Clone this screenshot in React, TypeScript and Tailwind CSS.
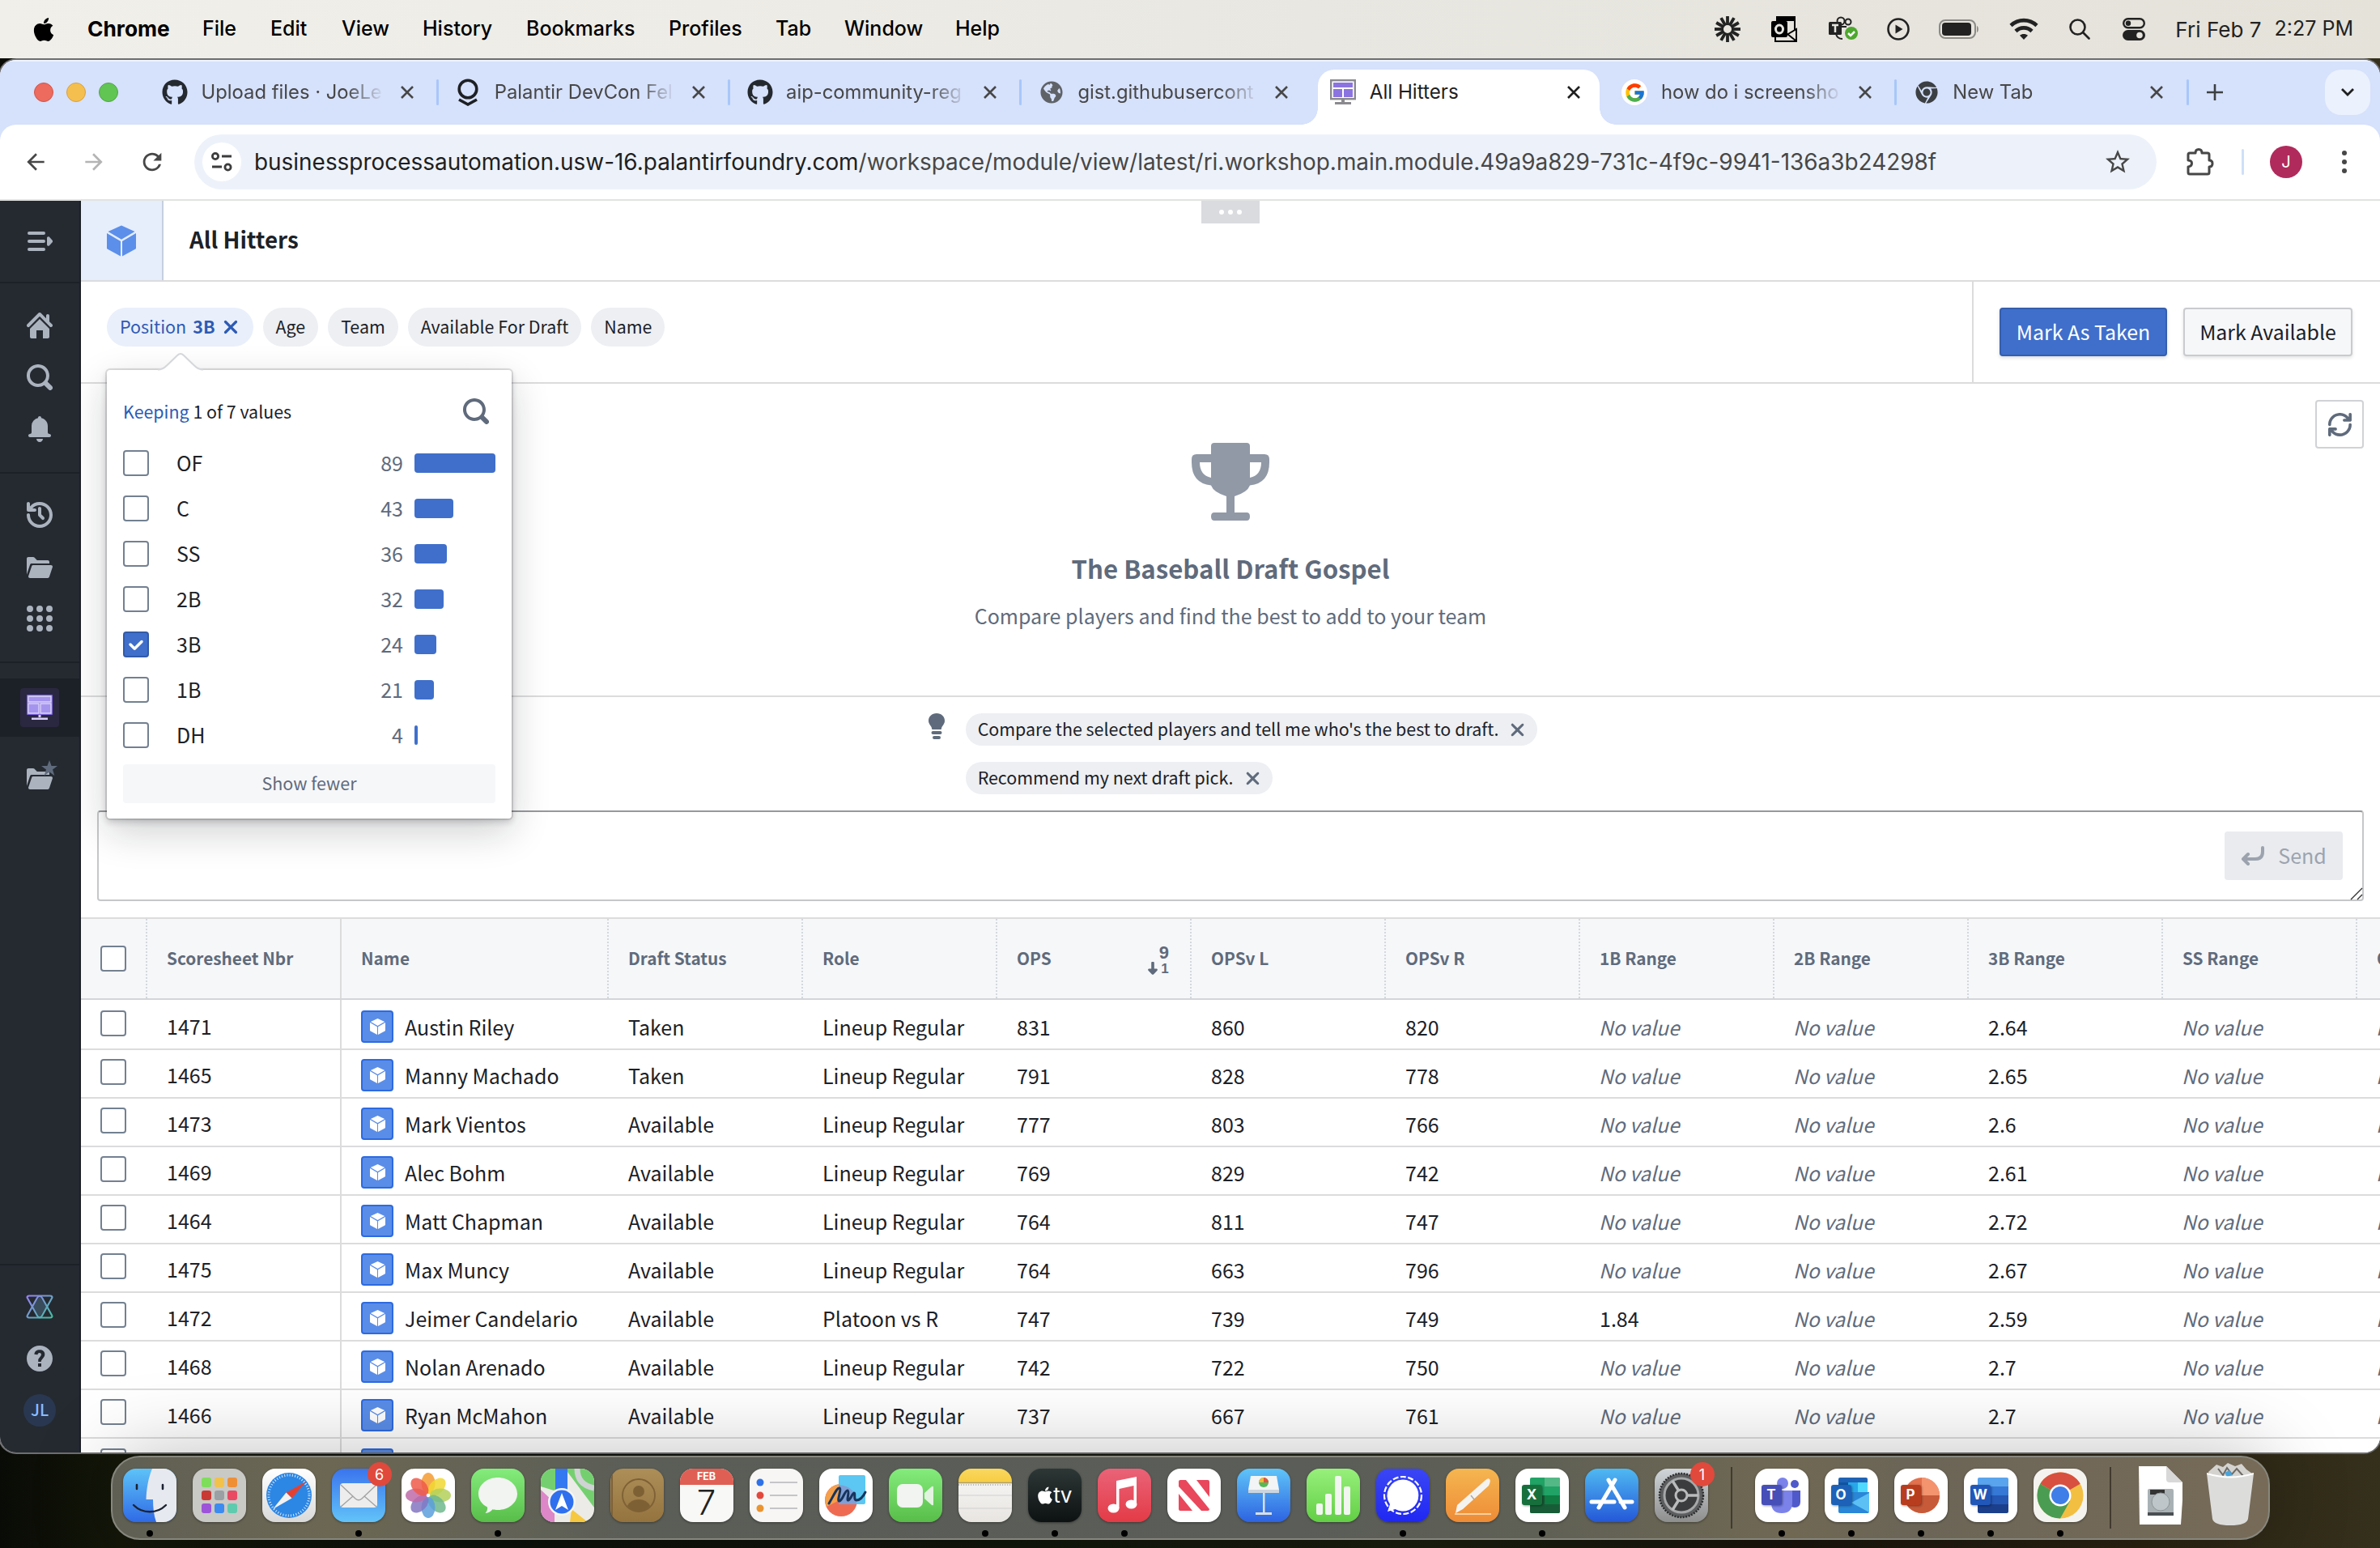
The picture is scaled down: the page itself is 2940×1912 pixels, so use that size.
import React from "react";
import { FaApple, FaGithub, FaGlobeAmericas, FaChrome } from "react-icons/fa";
import { FcGoogle } from "react-icons/fc";
import { MdArrowBack, MdArrowForward, MdRefresh, MdStarBorder } from "react-icons/md";

const glyphs = {
  search: "M15.55 13.43l-2.67-2.68a6.94 6.94 0 001.11-3.76c0-3.87-3.13-7-7-7s-7 3.13-7 7 3.13 7 7 7c1.39 0 2.68-.42 3.76-1.11l2.68 2.67a1.498 1.498 0 102.12-2.12zm-8.56-1.44c-2.76 0-5-2.24-5-5s2.24-5 5-5 5 2.24 5 5-2.24 5-5 5z",
  home: "M2 10v5c0 .55.45 1 1 1h3v-5h4v5h3c.55 0 1-.45 1-1v-5L8 4l-6 6zm13.71-2.71L14 5.59V2c0-.55-.45-1-1-1s-1 .45-1 1v1.59L8.71.29C8.53.11 8.28 0 8 0s-.53.11-.71.29l-7 7a1.003 1.003 0 001.42 1.42L8 2.41l6.29 6.29c.18.19.43.3.71.3a1.003 1.003 0 00.71-1.71z",
  folder: "M2.06 6.69c.14-.4.5-.69.94-.69h11V5c0-.55-.45-1-1-1H6.41l-1.7-1.71A.997.997 0 004 2H1c-.55 0-1 .45-1 1v9.84l2.05-6.15h.01zM16 8c0-.55-.45-1-1-1H4a.99.99 0 00-.94.69l-2 6c-.04.09-.06.2-.06.31 0 .55.45 1 1 1h11c.44 0 .81-.29.94-.69l2-6c.04-.09.06-.2.06-.31z",
  bell: "M8 16c1.1 0 2-.9 2-2H6c0 1.1.9 2 2 2zm6-5c-.55 0-1-.45-1-1V6c0-2.43-1.73-4.45-4.02-4.9 0-.04.02-.06.02-.1 0-.55-.45-1-1-1S7 .45 7 1c0 .04.02.06.02.1A4.992 4.992 0 003 6v4c0 .55-.45 1-1 1s-1 .45-1 1 .45 1 1 1h12c.55 0 1-.45 1-1s-.45-1-1-1z",
  history: "M8 3c-.55 0-1 .45-1 1v4c0 .28.11.53.29.71l2 2a1.003 1.003 0 001.42-1.42L9 7.59V4c0-.55-.45-1-1-1zm0-3a7.95 7.95 0 00-6 2.74V1c0-.55-.45-1-1-1s-1 .45-1 1v4c0 .55.45 1 1 1h4c.55 0 1-.45 1-1s-.45-1-1-1H3.54C4.64 2.78 6.23 2 8 2c3.31 0 6 2.69 6 6 0 3.31-2.69 6-6 6s-6-2.69-6-6c0-.55-.45-1-1-1s-1 .45-1 1c0 4.42 3.58 8 8 8s8-3.58 8-8-3.58-8-8-8z",
  refresh: "M14.99 6.99c-.55 0-1 .45-1 1 0 3.31-2.69 6-6 6-1.77 0-3.36-.78-4.46-2h1.46c.55 0 1-.45 1-1s-.45-1-1-1h-4c-.55 0-1 .45-1 1v4c0 .55.45 1 1 1s1-.45 1-1v-1.74a7.95 7.95 0 006 2.74c4.42 0 8-3.58 8-8 0-.55-.45-1-1-1zm0-7c-.55 0-1 .45-1 1v1.74a7.95 7.95 0 00-6-2.74c-4.42 0-8 3.58-8 8 0 .55.45 1 1 1s1-.45 1-1c0-3.31 2.69-6 6-6 1.77 0 3.36.78 4.46 2h-1.46c-.55 0-1 .45-1 1s.45 1 1 1h4c.55 0 1-.45 1-1v-4c0-.55-.45-1-1-1z",
  cross: "M9.41 8l3.29-3.29c.19-.18.3-.43.3-.71a1.003 1.003 0 00-1.71-.71L8 6.59l-3.29-3.3a1.003 1.003 0 00-1.42 1.42L6.59 8 3.3 11.29c-.19.18-.3.43-.3.71a1.003 1.003 0 001.71.71L8 9.41l3.29 3.29c.18.19.43.3.71.3a1.003 1.003 0 00.71-1.71L9.41 8z",
  help: "M8 0C3.58 0 0 3.58 0 8s3.58 8 8 8 8-3.58 8-8-3.58-8-8-8zm1 13H7v-2h2v2zm1.93-6.52c-.14.32-.35.64-.62.97L9.25 8.83c-.12.15-.24.29-.28.42-.04.13-.09.3-.09.52V10H7.12V8.88s.05-.51.21-.71L8.4 6.73c.22-.26.35-.49.44-.68.09-.19.12-.38.12-.58 0-.3-.1-.55-.28-.75-.18-.19-.44-.28-.76-.28-.33 0-.59.1-.78.29-.19.19-.33.46-.4.81-.03.11-.1.15-.2.14l-1.7-.25c-.12-.01-.16-.08-.14-.19.12-.82.46-1.47 1.03-1.94.57-.48 1.32-.72 2.25-.72.47 0 .9.07 1.29.22s.72.34 1 .59c.28.25.49.55.65.89.15.35.22.72.22 1.12s-.07.75-.21 1.08z",
  tick: "M12 5c-.28 0-.53.11-.71.29L7 9.59l-2.29-2.3a1.003 1.003 0 00-1.42 1.42l3 3c.18.18.43.29.71.29s.53-.11.71-.29l5-5A1.003 1.003 0 0012 5z",
  grid: "M2 0a2 2 0 100 4 2 2 0 000-4zm6 0a2 2 0 100 4 2 2 0 000-4zm6 0a2 2 0 100 4 2 2 0 000-4zM2 6a2 2 0 100 4 2 2 0 000-4zm6 0a2 2 0 100 4 2 2 0 000-4zm6 0a2 2 0 100 4 2 2 0 000-4zM2 12a2 2 0 100 4 2 2 0 000-4zm6 0a2 2 0 100 4 2 2 0 000-4zm6 0a2 2 0 100 4 2 2 0 000-4z",
  menuOpen: "M1.5 2h9a1 1 0 010 2h-9a1 1 0 010-2zm0 5h9a1 1 0 010 2h-9a1 1 0 010-2zm0 5h9a1 1 0 010 2h-9a1 1 0 010-2zM12.5 6c0-.8.8-1.2 1.4-.7l1.8 1.9c.5.5.5 1.1 0 1.6l-1.8 1.9c-.6.5-1.4.1-1.4-.7V6z",
};

function Glyph({ name, className = "w-8 h-8" }: { name: keyof typeof glyphs; className?: string }) {
  return (
    <svg viewBox="0 0 16 16" className={className} fill="currentColor">
      <path d={glyphs[name]} fillRule="evenodd" />
    </svg>
  );
}

function Cube({ className }: { className: string }) {
  return (
    <svg viewBox="0 0 36 38" className={className} fill="currentColor">
      <path d="M18 0l16.5 7.6L18 17.2 1.5 7.6z" />
      <path d="M0 9.6l17 9.8V38L1 29.3c-.7-.4-1-.9-1-1.6z" />
      <path d="M36 9.6l-17 9.8V38l16-8.700c.7-.4 1-.9 1-1.6z" />
    </svg>
  );
}

/* ---------- macOS menu bar ---------- */

function MenuBar() {
  return (
    <div className="flex h-[72px] shrink-0 items-center bg-[linear-gradient(90deg,#f0efe9_0%,#eeece6_30%,#e8e7e1_55%,#e5e2da_100%)] pl-[40px] pr-[33px] text-[25px] font-medium text-black">
      <FaApple className="h-[33px] w-[28px]" />
      <span className="ml-[40px] w-[142px] text-[26.300px] font-bold">Chrome</span>
      <span className="w-[84px]">File</span>
      <span className="w-[88px]">Edit</span>
      <span className="w-[100px]">View</span>
      <span className="w-[128px]">History</span>
      <span className="w-[176px]">Bookmarks</span>
      <span className="w-[132px]">Profiles</span>
      <span className="w-[85px]">Tab</span>
      <span className="w-[137px]">Window</span>
      <span>Help</span>
      <div className="ml-auto flex items-center text-[#222]">
        <svg viewBox="-17 -17 34 34" className="h-[34px] w-[34px]" stroke="#222" strokeWidth="3.800">
          {[0, 30, 60, 90, 120, 150, 180, 210, 240, 270, 300, 330].map((a) => (
            <line key={a} x1="0" y1="-6" x2="0" y2="-16" transform={`rotate(${a})`} />
          ))}
          <circle r="6" fill="none" strokeWidth="2" />
        </svg>
        <svg viewBox="0 0 32 32" className="ml-[37px] h-8 w-8" fill="none" stroke="#000" strokeWidth="2">
          <path d="M7 6V1h22v16M5 26v5h26V16l-11 6.500" />
          <path d="M7 2h22v3H7z" fill="#000" />
          <path d="M20 22l10 8" />
          <rect x="0" y="6" width="20" height="20" rx="2" fill="#000" stroke="none" />
          <ellipse cx="10" cy="16" rx="4.500" ry="5" stroke="#e6e5df" strokeWidth="3" />
        </svg>
        <svg viewBox="0 0 37 32" className="ml-[39px] h-8 w-[37px]" fill="none" stroke="#222" strokeWidth="2">
          <circle cx="15" cy="6" r="4.500" />
          <circle cx="24" cy="7" r="3.500" />
          <path d="M16 13h6M9 22c1 4 4 6 8 6" />
          <rect x="0" y="7" width="16" height="16" rx="1.500" fill="#222" stroke="none" />
          <path d="M4 11h8M8 11v9" stroke="#e6e5df" strokeWidth="2.500" />
          <circle cx="28" cy="21" r="8" fill="#4ea72e" stroke="none" />
          <path d="M24 21l3 3 5-5" stroke="#fff" strokeWidth="2.500" />
        </svg>
        <svg viewBox="0 0 28 28" className="ml-[35px] h-7 w-7" fill="none" stroke="#222" strokeWidth="2.600">
          <circle cx="14" cy="14" r="12.500" />
          <path d="M10.500 8.500l9 5.500-9 5.500z" fill="#222" stroke="none" />
        </svg>
        <svg viewBox="0 0 50 24" className="ml-[36px] h-6 w-[50px]" fill="none">
          <rect x="1" y="1" width="44" height="22" rx="7" stroke="#8b8a86" strokeWidth="2" />
          <rect x="4" y="4" width="36" height="16" rx="4" fill="#222" />
          <path d="M47 8c2.500 1 2.500 7 0 8z" fill="#8b8a86" />
        </svg>
        <svg viewBox="0 0 36 28" className="ml-[37px] h-7 w-[36px]" fill="none" stroke="#222" strokeWidth="4.600">
          <path d="M2 9.500c9-8.500 23-8.500 32 0" />
          <path d="M8 16.500c5.500-5.500 14.500-5.500 20 0" />
          <path d="M18 27l-5-5.200c2.800-2.400 7.200-2.400 10 0z" fill="#222" stroke="none" />
        </svg>
        <svg viewBox="0 0 26 26" className="ml-[38px] h-[26px] w-[26px]" fill="none" stroke="#222" strokeWidth="2.600" strokeLinecap="round">
          <circle cx="10.500" cy="10.500" r="9" />
          <path d="M17.500 17.500l7 7" />
        </svg>
        <svg viewBox="0 0 28 28" className="ml-[40px] h-7 w-7">
          <rect x="1.200" y="1.200" width="25.600" height="11" rx="5.500" fill="none" stroke="#222" strokeWidth="2.400" />
          <circle cx="7" cy="6.700" r="3.200" fill="#222" />
          <rect x="0" y="15" width="28" height="13" rx="6.500" fill="#222" />
          <circle cx="21" cy="21.500" r="3.800" fill="#e6e3dc" />
        </svg>
        <span className="ml-[37px] text-[26px] font-normal tracking-[0.050px]">Fri Feb 7</span>
        <span className="ml-[16px] text-[25px] font-normal">2:27 PM</span>
      </div>
    </div>
  );
}

/* ---------- Browser chrome ---------- */

function CloseX({ dark = false }: { dark?: boolean }) {
  return (
    <svg viewBox="0 0 16 16" className={dark ? "h-4 w-4 text-[#1f1f1f]" : "h-4 w-4 text-[#474747]"} stroke="currentColor" strokeWidth="2.600">
      <path d="M1 1l14 14M15 1L1 15" />
    </svg>
  );
}

const palantirMark = (
  <svg viewBox="0 0 26 34" className="h-[34px] w-[26px]" fill="none" stroke="#1e2124" strokeWidth="3.600">
    <circle cx="13" cy="13" r="10.800" />
    <path d="M2 26l11 6 11-6" />
  </svg>
);

const workshopMark = (
  <svg viewBox="0 0 32 32" className="h-8 w-8">
    <rect x="1.200" y="1.200" width="29.600" height="23" fill="#fff" stroke="#8a8a8f" strokeWidth="2.400" />
    <rect x="4" y="4" width="24" height="6" fill="#8b74e0" />
    <rect x="4" y="12" width="11" height="10" fill="#8b74e0" />
    <rect x="17" y="12" width="11" height="10" fill="#8b74e0" />
    <path d="M6 28h20v3H6zM14 25h4v3h-4z" fill="#8a8a8f" />
  </svg>
);

const tabs = [
  { title: "Upload files · JoeLe", icon: <FaGithub className="h-[32px] w-[32px] text-[#24292f]" />, sep: true, first: true },
  { title: "Palantir DevCon Fel", icon: palantirMark, sep: true },
  { title: "aip-community-reg", icon: <FaGithub className="h-[32px] w-[32px] text-[#24292f]" />, sep: true },
  { title: "gist.githubusercont", icon: <FaGlobeAmericas className="h-[28px] w-[28px] text-[#5f6368]" />, sep: false },
  { title: "All Hitters", icon: workshopMark, sep: false, active: true },
  { title: "how do i screensho", icon: <span className="flex h-8 w-8 items-center justify-center rounded-full bg-white"><FcGoogle className="h-[27px] w-[27px]" /></span>, sep: true },
  { title: "New Tab", icon: <FaChrome className="h-[28px] w-[28px] text-[#3c4043]" />, sep: true },
];

function TabStrip() {
  return (
    <div className="flex h-[80px] shrink-0 bg-[#d6e1fb] pl-[42px] shadow-[inset_0_2px_0_#eef3fd]">
      <div className="flex w-[137.500px] items-center gap-4">
        <span className="h-6 w-6 rounded-full border border-[#d35448] bg-[#ed6a5e]" />
        <span className="h-6 w-6 rounded-full border border-[#d9a13e] bg-[#f5bf4f]" />
        <span className="h-6 w-6 rounded-full border border-[#50a73f] bg-[#61c554]" />
      </div>
      {tabs.map((t) => (
        <div key={t.title} className="relative flex h-full w-[360.300px] items-center">
          {t.active && (
            <>
              <div className="absolute bottom-0 left-[7px] h-[68px] w-[348px] rounded-t-[20px] bg-white" />
              <div className="absolute bottom-0 left-[-13px] h-5 w-5 bg-[radial-gradient(circle_at_0_0,transparent_19.500px,#fff_20px)]" />
              <div className="absolute bottom-0 left-[355px] h-5 w-5 bg-[radial-gradient(circle_at_100%_0,transparent_19.500px,#fff_20px)]" />
            </>
          )}
          <div className={t.first ? "relative ml-[20px] flex w-8 justify-center" : "relative ml-[22.500px] flex w-8 justify-center"}>{t.icon}</div>
          <div
            className={
              t.active
                ? "relative ml-[16.500px] w-[222px] whitespace-nowrap text-[24.200px] text-[#1f1f1f]"
                : t.first
                  ? "relative ml-[17px] w-[223px] whitespace-nowrap text-[23.800px] text-[#474747] [mask-image:linear-gradient(90deg,#000_80%,transparent_101%)]"
                  : "relative ml-[16.500px] w-[221px] whitespace-nowrap text-[23.800px] text-[#474747] [mask-image:linear-gradient(90deg,#000_80%,transparent_101%)]"
            }
          >
            {t.title}
          </div>
          <div className={t.active ? "relative ml-[22px]" : "relative ml-[23px]"}>
            <CloseX dark={t.active} />
          </div>
          {t.sep && <span className="absolute right-[-2px] h-8 w-[3px] rounded bg-[#a8c7fa]" />}
        </div>
      ))}
      <div className="flex flex-1 items-center pl-[24px] pr-[12px]">
        <svg viewBox="0 0 20 20" className="h-5 w-5" stroke="#3c4043" strokeWidth="2.600"><path d="M10 0v20M0 10h20" /></svg>
        <div className="ml-auto flex h-14 w-14 items-center justify-center rounded-[20px] bg-[#ebf1fd]">
          <svg viewBox="0 0 16 10" className="h-[10px] w-4" fill="none" stroke="#1f1f1f" strokeWidth="2.800"><path d="M1 1l7 7 7-7" /></svg>
        </div>
      </div>
    </div>
  );
}

function Toolbar() {
  return (
    <div className="shrink-0 bg-[#d6e1fb]">
      <div className="flex h-[94px] items-center rounded-t-[20px] border-b-2 border-[#e1e3e1] bg-white pl-[28px]">
        <MdArrowBack className="h-8 w-8 text-[#474747]" />
        <MdArrowForward className="ml-[40px] h-8 w-8 text-[#b4b4b4]" />
        <MdRefresh className="ml-[39px] h-[34px] w-[34px] text-[#474747]" />
        <div className="ml-[35px] flex h-[68px] w-[2424px] items-center rounded-full bg-[#edf2fa] pl-[10px] pr-[30px]">
          <div className="flex h-12 w-12 items-center justify-center rounded-full bg-white">
            <svg viewBox="0 0 26 24" className="h-6 w-[26px]" fill="none" stroke="#3c3c3c" strokeWidth="2.800">
              <circle cx="5" cy="5" r="3.600" /><path d="M13 5h12M1 18h12" /><circle cx="20.500" cy="18.500" r="3.600" />
            </svg>
          </div>
          <div className="ml-[16px] whitespace-nowrap pt-[2px] text-[27.930px] text-[#474747]">
            <span className="text-[#1f1f1f]">businessprocessautomation.usw-16.palantirfoundry.com</span>/workspace/module/view/latest/ri.workshop.main.module.49a9a829-731c-4f9c-9941-136a3b24298f
          </div>
          <MdStarBorder className="ml-auto h-9 w-9 text-[#474747]" />
        </div>
        <svg viewBox="0 0 34 34" className="ml-[37px] h-[34px] w-[34px]" fill="none" stroke="#474747" strokeWidth="3" strokeLinejoin="round">
          <path d="M2 8q0-2 2-2h7q0-4.500 4-4.500T19 6h7q2 0 2 2v7q4 0 4 4t-4 4v7q0 2-2 2H4q-2 0-2-2v-7q4.500-.5 4.500-4.200T2 15z" />
        </svg>
        <span className="ml-[34px] h-8 w-[3px] rounded bg-[#cfdff8]" />
        <span className="ml-[32px] flex h-10 w-10 items-center justify-center rounded-full bg-[#b02a5b] text-[20px] text-white">J</span>
        <svg viewBox="0 0 6 28" className="ml-[49px] h-7 w-[6px]" fill="#474747"><circle cx="3" cy="3" r="3" /><circle cx="3" cy="14" r="3" /><circle cx="3" cy="25" r="3" /></svg>
      </div>
    </div>
  );
}

/* ---------- Foundry sidebar ---------- */

function Slot({ children }: { children: React.ReactNode }) {
  return <div className="flex h-16 items-center justify-center">{children}</div>;
}

function Sidebar() {
  return (
    <div className="flex w-[100px] shrink-0 flex-col border-r-2 border-[#1c2127] bg-[#252a31] text-[#abb3bf]">
      <div className="flex h-[100px] items-center justify-center"><Glyph name="menuOpen" /></div>
      <div className="border-t-2 border-[#1c2127] pb-[21px] pt-[20px]">
        <Slot><Glyph name="home" /></Slot>
        <Slot><Glyph name="search" /></Slot>
        <Slot><Glyph name="bell" /></Slot>
      </div>
      <div className="border-t-2 border-[#1c2127] pb-[21px] pt-[19px]">
        <Slot><Glyph name="history" /></Slot>
        <Slot><Glyph name="folder" /></Slot>
        <Slot><Glyph name="grid" /></Slot>
      </div>
      <div className="border-t-2 border-[#1c2127] pt-[19px]">
        <div className="flex h-[72px] items-center justify-center bg-[#1c2127]">
          <div className="flex h-12 w-12 items-center justify-center rounded-[4px] bg-[#2a2840]">
            <svg viewBox="0 0 32 32" className="h-8 w-8">
              <rect width="32" height="25" rx="1" fill="#7961db" />
              <path d="M2 2h28v7H2zM2 11h13v12H2zM17 11h13v12H17z" fill="#a594ee" stroke="#ddd5fb" strokeWidth="1.400" />
              <path d="M14.500 25h3v3h-3zM6 28.500h20V31H6z" fill="#d9d0fa" />
            </svg>
          </div>
        </div>
      </div>
      <div className="mt-[19px] flex h-16 items-center justify-center">
        <div className="relative">
          <Glyph name="folder" />
          <svg viewBox="0 0 20 20" className="absolute -right-[6px] -top-[6px] h-5 w-5 fill-[#5f6b7c]"><path d="M10 0l2.600 7H20l-6 4.400L16.300 19 10 14.500 3.700 19 6 11.400 0 7h7.400z" /></svg>
        </div>
      </div>
      <div className="mt-auto border-t-2 border-[#1c2127] pb-[20px] pt-[19px]">
        <Slot>
          <svg viewBox="0 0 34 30" className="h-[30px] w-[34px]" fill="none" strokeWidth="2.200">
            <defs>
              <linearGradient id="aip" x1="0" y1="0" x2="1" y2="1"><stop offset="0" stopColor="#9881f3" /><stop offset="1" stopColor="#43bf9f" /></linearGradient>
            </defs>
            <path d="M17 2l8 13-8 13-8-13z" fill="#3f5566" opacity=".8" />
            <path d="M4 1.500h26c2 0 3 1.500 2 3L20 26c-1.500 3-4.500 3-6 0L2 4.500c-1-1.500 0-3 2-3z" stroke="url(#aip)" />
            <path d="M4 28.500h26c2 0 3-1.500 2-3L20 4c-1.500-3-4.500-3-6 0L2 25.500c-1 1.500 0 3 2 3z" stroke="url(#aip)" />
          </svg>
        </Slot>
        <Slot><Glyph name="help" /></Slot>
        <Slot>
          <span className="flex h-10 w-10 items-center justify-center rounded-full bg-[#293850] pb-[2px] font-['Noto_Sans_CJK_SC',sans-serif] text-[20px] font-medium text-[#8abbff]">JL</span>
        </Slot>
      </div>
    </div>
  );
}

/* ---------- Workshop module ---------- */

function Checkbox({ checked = false }: { checked?: boolean }) {
  return checked ? (
    <span className="flex h-8 w-8 shrink-0 items-center justify-center rounded-[4px] border-2 border-[#325aa8] bg-[#3f6fcb] text-white"><Glyph name="tick" /></span>
  ) : (
    <span className="block h-8 w-8 shrink-0 rounded-[4px] border-2 border-[#738091] bg-white" />
  );
}

function Chip({ children }: { children: React.ReactNode }) {
  return <span className="flex h-12 items-center rounded-full bg-[#edeff2] px-4 pb-[1px] text-[21.400px]">{children}</span>;
}

const positions = [
  { label: "OF", count: 89, width: 100 },
  { label: "C", count: 43, width: 48 },
  { label: "SS", count: 36, width: 40 },
  { label: "2B", count: 32, width: 36 },
  { label: "3B", count: 24, width: 27, checked: true },
  { label: "1B", count: 21, width: 24 },
  { label: "DH", count: 4, width: 4 },
];

function PositionPopover() {
  return (
    <div className="absolute left-[32px] top-[109px] z-10 h-[554px] w-[500px] rounded-[4px] bg-white px-5 pt-[20px] shadow-[0_0_0_2px_rgba(17,20,24,0.12),0_4px_8px_rgba(17,20,24,0.2),0_16px_48px_rgba(17,20,24,0.2)]">
      <svg viewBox="0 0 60 24" className="absolute -top-[22px] left-[61px] h-6 w-[60px]">
        <path d="M0 22c6 0 9-2 13-6L26 4q4-4 8 0l13 12c4 4 7 6 13 6v2H0z" fill="#fff" />
        <path d="M2 21.500c5 0 8-2 11-5L26 4q4-4 8 0l13 12.500c3 3 6 5 11 5" fill="none" stroke="#d5d7da" strokeWidth="2" />
      </svg>
      <div className="flex h-[62px] items-center justify-between pr-2 text-[21.400px]">
        <span><span className="text-[#2d5bb5]">Keeping</span> 1 of 7 values</span>
        <Glyph name="search" className="h-8 w-8 text-[#5f6b7c]" />
      </div>
      <div className="mt-[5px] flex flex-col">
        {positions.map((p) => (
          <div key={p.label} className="flex h-14 items-center text-[25px]">
            <Checkbox checked={p.checked} />
            <span className="ml-[34px] flex-1 pb-[1px]">{p.label}</span>
            <span className="pb-[1px] text-[#5f6b7c]">{p.count}</span>
            <span className="ml-[14px] w-[100px]">
              <span className="block h-6 rounded-[4px] bg-[#3f6fcb]" style={{ width: p.width }} />
            </span>
          </div>
        ))}
      </div>
      <div className="mt-[8px] flex h-12 items-center justify-center rounded-[4px] bg-[#f6f7f9] pb-[2px] text-[21.500px] text-[#5f6b7c]">Show fewer</div>
    </div>
  );
}

const headers = ["Draft Status", "Role", "OPS", "OPSv L", "OPSv R", "1B Range", "2B Range", "3B Range", "SS Range"];

const rows: [string, string, string, string, string, string, string, string, string][] = [
  ["1471", "Austin Riley", "Taken", "Lineup Regular", "831", "860", "820", "", "2.64"],
  ["1465", "Manny Machado", "Taken", "Lineup Regular", "791", "828", "778", "", "2.65"],
  ["1473", "Mark Vientos", "Available", "Lineup Regular", "777", "803", "766", "", "2.6"],
  ["1469", "Alec Bohm", "Available", "Lineup Regular", "769", "829", "742", "", "2.61"],
  ["1464", "Matt Chapman", "Available", "Lineup Regular", "764", "811", "747", "", "2.72"],
  ["1475", "Max Muncy", "Available", "Lineup Regular", "764", "663", "796", "", "2.67"],
  ["1472", "Jeimer Candelario", "Available", "Platoon vs R", "747", "739", "749", "1.84", "2.59"],
  ["1468", "Nolan Arenado", "Available", "Lineup Regular", "742", "722", "750", "", "2.7"],
  ["1466", "Ryan McMahon", "Available", "Lineup Regular", "737", "667", "761", "", "2.7"],
];

function Value({ text }: { text: string }) {
  return (
    <div className="w-[240px] shrink-0 whitespace-nowrap pl-6 pt-[5px]">
      {text || <span className="-ml-px text-[24.500px] italic text-[#5f6b7c]">No value</span>}
    </div>
  );
}

function ObjectIcon() {
  return (
    <span className="mt-[4px] flex h-10 w-10 shrink-0 items-center justify-center rounded-[4px] border-2 border-[#2d6ae0] bg-[#5a8de8] text-white">
      <Cube className="h-[20px] w-[19px]" />
    </span>
  );
}

function Table() {
  return (
    <div className="flex min-h-0 flex-1 flex-col overflow-hidden border-t-2 border-[#dcdcdd]">
      <div className="flex h-[100px] shrink-0 border-b-2 border-[#d3d5d8] bg-[#f6f7f9] text-[20.800px] font-bold text-[#5f6b7c]">
        <div className="flex w-[82px] shrink-0 items-center border-r-2 border-dotted border-[#d3d8de] pl-6"><Checkbox /></div>
        <div className="flex w-[240px] shrink-0 items-center border-r-2 border-[#dcdcdd] pb-[1px] pl-6">Scoresheet Nbr</div>
        <div className="flex w-[330px] shrink-0 items-center border-r-2 border-dotted border-[#d3d8de] pb-[1px] pl-6">Name</div>
        {headers.map((h) => (
          <div key={h} className="flex w-[240px] shrink-0 items-center border-r-2 border-dotted border-[#d3d8de] pb-[1px] pl-6 pr-[26px]">
            <span className="flex-1">{h}</span>
            {h === "OPS" && (
              <span className="flex items-end font-['Liberation_Sans',sans-serif] text-[22px] leading-[17px]">
                <svg viewBox="0 0 12 16" className="mb-px mr-[2px] h-4 w-3" fill="currentColor"><path d="M4.200 1.500a1.800 1.800 0 013.600 0v7h2.700c1.300 0 1.800 1.300 1 2.200l-4.500 4.700c-.6.6-1.400.6-2 0L.5 10.700C-.3 9.800.2 8.500 1.500 8.500h2.700z" /></svg>
                <span className="flex flex-col items-center pt-[5px]"><span>9</span><span className="mt-[3px] pl-[2px] text-[17px]">1</span></span>
              </span>
            )}
          </div>
        ))}
        <div className="flex w-[240px] shrink-0 items-center pb-[1px] pl-6">OF Range</div>
      </div>
      <div className="flex flex-col bg-white pt-[2px] text-[25px]">
        {rows.map((r) => (
          <div key={r[0]} className="flex h-[60px] shrink-0 items-center border-b-2 border-[#dcdcdd]">
            <div className="w-[82px] shrink-0 pb-[4px] pl-6"><Checkbox /></div>
            <div className="-mt-[2px] flex h-[60px] w-[240px] shrink-0 items-center border-r-2 border-[#dcdcdd] pl-6 pt-[6px]">{r[0]}</div>
            <div className="flex w-[330px] shrink-0 items-center pl-6">
              <ObjectIcon />
              <span className="ml-[14px] pt-[5px]">{r[1]}</span>
            </div>
            <div className="w-[240px] shrink-0 pl-6 pt-[5px]">{r[2]}</div>
            <div className="w-[240px] shrink-0 pl-6 pt-[5px]">{r[3]}</div>
            <div className="w-[240px] shrink-0 pl-6 pt-[5px]">{r[4]}</div>
            <div className="w-[240px] shrink-0 pl-6 pt-[5px]">{r[5]}</div>
            <div className="w-[240px] shrink-0 pl-6 pt-[5px]">{r[6]}</div>
            <Value text={r[7]} />
            <Value text="" />
            <Value text={r[8]} />
            <Value text="" />
            <Value text="" />
          </div>
        ))}
        <div className="flex h-[60px] shrink-0 items-center">
          <div className="w-[82px] shrink-0 pb-[4px] pl-6"><Checkbox /></div>
          <div className="h-full w-[240px] shrink-0 border-r-2 border-[#dcdcdd]" />
          <div className="pl-6"><ObjectIcon /></div>
        </div>
      </div>
    </div>
  );
}

function Suggestion({ text }: { text: string }) {
  return (
    <span className="flex h-10 items-center gap-[11px] rounded-full bg-[#edeff2] pl-[15px] pr-[12px] text-[21.430px]">
      <span className="pb-[2px]">{text}</span>
      <Glyph name="cross" className="h-[25px] w-[25px] text-[#5f6b7c]" />
    </span>
  );
}

function Module() {
  return (
    <div className="flex min-w-0 flex-1 flex-col overflow-hidden bg-white font-['Noto_Sans_CJK_SC',sans-serif] leading-normal text-[#1c2127]">
      <div className="relative flex h-[100px] shrink-0 border-b-2 border-[#dcdcdd]">
        <div className="flex w-[102px] items-center justify-center border-r-2 border-[#c5cfe0] bg-[#e6eefc] text-[#5c8fea]">
          <Cube className="h-[39px] w-[36px]" />
        </div>
        <div className="flex items-center pb-[2px] pl-[32px] text-[27.700px] font-bold">All Hitters</div>
        <div className="absolute left-[1384px] top-0 flex h-7 w-[72px] items-center justify-center gap-[5px] bg-[#d9dbde]">
          <i className="h-[6px] w-[6px] rounded-full bg-white" /><i className="h-[6px] w-[6px] rounded-full bg-white" /><i className="h-[6px] w-[6px] rounded-full bg-white" />
        </div>
      </div>
      <div className="relative flex h-[126px] shrink-0 border-b-2 border-[#dcdcdd]">
        <div className="flex flex-1 items-start gap-3 pl-8 pt-8">
          <span className="flex h-12 items-center rounded-full bg-[#e9effb] pl-4 pr-[15px] text-[21.500px] text-[#2d5bb5]">
            <span className="pb-[1px]">Position</span>
            <span className="ml-[8px] pb-[1px] font-bold">3B</span>
            <Glyph name="cross" className="ml-[6px] h-[26px] w-[26px]" />
          </span>
          <Chip>Age</Chip>
          <Chip>Team</Chip>
          <Chip>Available For Draft</Chip>
          <Chip>Name</Chip>
        </div>
        <div className="flex w-[504px] items-start gap-5 border-l-2 border-[#dcdcdd] pl-[32px] pt-8 text-[24.900px]">
          <button className="h-[60px] w-[207px] whitespace-nowrap rounded-[4px] border-2 border-[#355eae] bg-[#3f6fcb] pb-[1px] text-white shadow-[0_2px_4px_rgba(17,20,24,0.15)]">Mark As Taken</button>
          <button className="h-[60px] w-[209px] whitespace-nowrap rounded-[4px] border-2 border-[#c9cbce] bg-[#f6f7f9] pb-[1px] shadow-[0_2px_4px_rgba(17,20,24,0.12)]">Mark Available</button>
        </div>
        <PositionPopover />
      </div>
      <div className="relative flex h-[387px] shrink-0 flex-col items-center border-b-2 border-[#dcdcdd] pt-[73px]">
        <svg viewBox="0 0 96 96" className="h-24 w-24 fill-[#9199a7]">
          <path d="M28 0h40q4 0 4 4v10h18q6 0 6 6v4q0 26-24 28.500Q69 61 53 66v20h15q4 0 4 5t-4 5H28q-4 0-4-5t4-5h15V66Q27 61 24 52.500 0 50 0 24v-4q0-6 6-6h18V4q0-4 4-4zM24 24H10q0 16 14 19zm48 0v19q14-3 14-19z" fillRule="evenodd" />
        </svg>
        <div className="mt-[35px] text-[31.200px] font-bold leading-[48px] text-[#5f6b7c]">The Baseball Draft Gospel</div>
        <div className="mt-[16px] text-[25px] leading-[36px] text-[#5f6b7c]">Compare players and find the best to add to your team</div>
        <div className="absolute right-[20px] top-[20px] flex h-[60px] w-[60px] items-center justify-center rounded-[4px] border-2 border-[#d0d2d5] text-[#5f6b7c]">
          <Glyph name="refresh" className="h-[29px] w-[29px]" />
        </div>
      </div>
      <div className="flex h-[140px] shrink-0 justify-center gap-5 pt-[20px]">
        <svg viewBox="0 0 32 32" className="h-8 w-8 fill-[#5f6b7c]">
          <path d="M16 0c5.800 0 10 4 10 9.200 0 4.800-4 6.300-4 9.800 0 .6-.6 1-1.200 1h-9.600c-.6 0-1.200-.4-1.200-1 0-3.500-4-5-4-9.800C6 4 10.200 0 16 0zM11.500 22h9a2 2 0 010 4h-9a2 2 0 010-4zM13 28h6a2 2 0 010 4h-6a2 2 0 010-4z" />
        </svg>
        <div className="flex flex-col items-start gap-5">
          <Suggestion text="Compare the selected players and tell me who's the best to draft." />
          <Suggestion text="Recommend my next draft pick." />
        </div>
      </div>
      <div className="relative mx-5 mb-5 flex h-[112px] shrink-0 items-center justify-end rounded-[4px] border-2 border-[#c6c7c9] border-t-[#97989b] pr-[24px]">
        <div className="flex h-[60px] w-[146px] items-center justify-center gap-[16px] rounded-[4px] bg-[#e9ebef] text-[25px] text-[#9ca3ae]">
          <svg viewBox="0 0 30 26" className="h-[26px] w-[30px]" fill="none" stroke="currentColor" strokeWidth="4" strokeLinecap="round" strokeLinejoin="round"><path d="M27 3v5c0 6-3 9-9 9H4M9 11l-6 6 6 6" /></svg>
          <span className="pb-[1px]">Send</span>
        </div>
        <svg viewBox="0 0 16 16" className="absolute -bottom-px -right-px h-4 w-4" stroke="#333" strokeWidth="1.400"><path d="M1 15L15 1M9 15l6-6" /></svg>
      </div>
      <Table />
    </div>
  );
}

/* ---------- Dock ---------- */

function Tile({ bg, children, dot = false, badge }: { bg: string; children?: React.ReactNode; dot?: boolean; badge?: string }) {
  return (
    <div className="relative flex w-[86px] shrink-0 flex-col items-center">
      <div className={`relative flex h-[66px] w-[66px] items-center justify-center overflow-hidden rounded-[16px] shadow-[0_1px_3px_rgba(0,0,0,0.4)] ${bg}`}>{children}</div>
      {badge && <span className="absolute -top-[8px] right-[2px] flex h-[30px] w-[30px] items-center justify-center rounded-full bg-[#e0493c] text-[18px] text-white">{badge}</span>}
      {dot && <span className="mt-[10px] h-2 w-2 rounded-full bg-black" />}
    </div>
  );
}

function Art({ children }: { children: React.ReactNode }) {
  return <svg viewBox="0 0 66 66" className="h-[66px] w-[66px]" fill="none">{children}</svg>;
}

function OfficeBadge({ letter, className }: { letter: string; className: string }) {
  return <span className={`absolute left-[8px] top-[20px] flex h-[25px] w-[25px] items-center justify-center rounded-[3px] text-[17px] font-bold text-white shadow-[1px_1px_3px_rgba(0,0,0,0.4)] ${className}`}>{letter}</span>;
}

const launchpad = ["#7ede5b", "#f2c14a", "#ee8f36", "#c93a35", "#9aa0a4", "#ea4964", "#9d54d8", "#3c8bf0", "#5fcbae"];
const petals = ["#f59b31", "#f0d831", "#b4d05a", "#6fb98c", "#5b9fdc", "#8476c2", "#c06aa8", "#ef5a4a"];

function Divider() {
  return <div className="flex w-[38px] shrink-0 justify-center"><span className="-mt-[2px] h-[76px] w-[2px] bg-[#403a30]" /></div>;
}

function Dock() {
  return (
    <div className="z-10 mt-[4px] flex h-[104px] w-[2667px] shrink-0 self-center rounded-[36px] border-2 border-[#87877e] bg-[linear-gradient(90deg,#5f5f54_0%,#6c6753_10%,#5b5e57_24%,#5a5d58_55%,#5f6055_66%,#706853_78%,#6b6557_83%,#776b58_100%)] pl-[3px] pt-[14px] shadow-[0_0_100px_rgba(0,0,0,0.27)]">
      <Tile bg="bg-[linear-gradient(180deg,#5dc3f8,#2f6ae6)]" dot>
        <Art>
          <path d="M36 0C31 12 29 25 28.500 38H37c0 10 1 20 4 28h25V0z" fill="#e6e9ef" />
          <path d="M13 45c11 11 29 11 40 0" stroke="#1b2230" strokeWidth="2.400" strokeLinecap="round" />
          <path d="M17 20v5M49 20v5" stroke="#1b2230" strokeWidth="2.600" strokeLinecap="round" />
        </Art>
      </Tile>
      <Tile bg="bg-[#c9c9c6]">
        <div className="grid grid-cols-3 gap-[4px]">
          {launchpad.map((c) => <svg key={c} viewBox="0 0 12 12" className="h-3 w-3"><rect width="12" height="12" rx="3" fill={c} /></svg>)}
        </div>
      </Tile>
      <Tile bg="bg-[linear-gradient(180deg,#fff,#d9d9d9)]">
        <Art>
          <circle cx="33" cy="33" r="28" fill="#2c86e4" />
          <circle cx="33" cy="33" r="25" stroke="#d6e8fb" strokeWidth="3" strokeDasharray="1 2.270" />
          <path d="M54 16L36.500 36.500l-7-7z" fill="#e5402f" />
          <path d="M13 50l16.500-20.500 7 7z" fill="#f2f2f2" />
        </Art>
      </Tile>
      <Tile bg="bg-[linear-gradient(180deg,#3a74ee,#62c3f8)]" dot badge="6">
        <Art>
          <rect x="10" y="18" width="46" height="30" rx="4" fill="#ededed" />
          <path d="M11 20l18 17q4 3.500 8 0l18-17M11 47l15-13M55 47L40 34" stroke="#a3a3a3" strokeWidth="1.400" />
        </Art>
      </Tile>
      <Tile bg="bg-white">
        <Art>
          {petals.map((c, i) => <ellipse key={c} cx="33" cy="18" rx="8.500" ry="13" fill={c} opacity=".85" transform={`rotate(${i * 45} 33 33)`} />)}
        </Art>
      </Tile>
      <Tile bg="bg-[linear-gradient(180deg,#84ec7c,#58bd49)]" dot>
        <Art><path d="M33 11c13 0 24 8.600 24 20S46 51 33 51c-2.500 0-4.500-.2-6.500-.8-2 2.500-5 4.600-9 4.800 2-2.200 3-4.600 2.500-7.500C13 44 9 38 9 31c0-11.400 11-20 24-20z" fill="#f1f4f1" /></Art>
      </Tile>
      <Tile bg="bg-[#ecebe8]">
        <Art>
          <path d="M0 0h26v30L0 22z" fill="#74d06f" /><path d="M30 0h36v48z" fill="#74d06f" />
          <path d="M0 26l17 16v24H0z" fill="#dd86c8" /><path d="M38 50l20 16H36z" fill="#f6c841" />
          <path d="M18 0h15v30H18z" fill="#3478f1" />
          <path d="M45 0q0 20 21 24" stroke="#cfd3d4" strokeWidth="7" />
          <circle cx="26" cy="41" r="17" fill="#f5f5f5" /><circle cx="26" cy="41" r="14.500" fill="#2f70ef" />
          <path d="M26 30l8 21-8-5-8 5z" fill="#fff" />
        </Art>
      </Tile>
      <Tile bg="bg-[linear-gradient(180deg,#ad8e58,#94733f)]">
        <Art>
          <path d="M2 0v66" stroke="#7e6136" strokeWidth="2" />
          <circle cx="35" cy="33" r="20" stroke="#7d6135" strokeWidth="1.800" />
          <circle cx="35" cy="28" r="7" fill="#7d6135" /><path d="M21 46q4-8 14-8t14 8q-6 7-14 7t-14-7z" fill="#7d6135" />
        </Art>
      </Tile>
      <Tile bg="bg-[#f8f8f6]">
        <div className="flex h-full w-full flex-col items-center">
          <span className="flex h-[20px] w-full items-center justify-center bg-[#e05f54] text-[12.500px] font-bold text-white">FEB</span>
          <span className="text-[42px] font-light leading-[44px] text-[#222]">7</span>
        </div>
      </Tile>
      <Tile bg="bg-[#f7f6f4]">
        <Art>
          <circle cx="13" cy="17" r="4.500" fill="#2f72e8" /><circle cx="13" cy="33" r="4.500" fill="#e3483c" /><circle cx="13" cy="49" r="4.500" fill="#ea9430" />
          <path d="M25 17h34M25 33h34M25 49h34" stroke="#b5b5ba" strokeWidth="1.500" />
        </Art>
      </Tile>
      <Tile bg="bg-white">
        <Art>
          <circle cx="27" cy="39" r="20" fill="#ee6b51" /><path d="M9 47a20 20 0 0 1 16-28v20z" fill="#f5a04a" />
          <rect x="24" y="8" width="33" height="36" rx="2" fill="#5cc7f2" /><path d="M24 44V20q23 2 22 24z" fill="#7f9fd6" />
          <path d="M12 43c6-10 10-20 13-19s-4 17 0 16 7-14 10-13-2 13 1 12 5-9 7-9-1 9 3 9 8-4 11-10" stroke="#17345c" strokeWidth="3" strokeLinecap="round" />
        </Art>
      </Tile>
      <Tile bg="bg-[linear-gradient(180deg,#84ec7c,#58bd49)]">
        <Art><rect x="10" y="19" width="32" height="29" rx="7" fill="#f1f4f1" /><path d="M44 30l9-8q2-1 2 1v21q0 2-2 1l-9-8z" fill="#e2f3e0" /></Art>
      </Tile>
      <Tile bg="bg-[linear-gradient(180deg,#f9d860_0%,#f7cd43_25%,#f4f3f1_26%,#e8e5e1_100%)]" dot>
        <Art><path d="M0 17.500h66" stroke="#a89b78" strokeWidth="1.500" /><path d="M0 20h66" stroke="#aaa" strokeWidth="1.600" strokeDasharray="1.200 1.800" /><path d="M0 33h66M0 49h66" stroke="#cfcfd2" strokeWidth="1.200" /></Art>
      </Tile>
      <Tile bg="bg-[linear-gradient(180deg,#2d3736,#0d1112)]" dot>
        <span className="flex items-center text-white"><FaApple className="h-[24px] w-[20px]" /><span className="text-[26px] leading-none tracking-tight">tv</span></span>
      </Tile>
      <Tile bg="bg-[linear-gradient(180deg,#ea6378,#e33b46)]" dot>
        <Art>
          <path d="M23 15l25-5v34h-3.500V21L26.500 25v24H23z" fill="#fff" />
          <ellipse cx="19.500" cy="49" rx="7" ry="5.500" fill="#fff" /><ellipse cx="41.500" cy="44" rx="7" ry="5.500" fill="#fff" />
        </Art>
      </Tile>
      <Tile bg="bg-white">
        <Art>
          <path d="M14 16q0-2 2-2h7l29 36q0 2-2 2h-8L14 22z" fill="#e9475c" /><path d="M36 14h14q2 0 2 2v19zM14 31l17 21H16q-2 0-2-2z" fill="#e9475c" />
        </Art>
      </Tile>
      <Tile bg="bg-[linear-gradient(180deg,#5fc4f8,#2d63e2)]">
        <Art><path d="M17 9h32l3 17v4H14v-4z" fill="#f2f4f6" /><path d="M14 26h38v4H14z" fill="#ccd5dd" /><path d="M32 30h2.500v25H32zM23 54h20v3H23z" fill="#d9dfe4" /><circle cx="33" cy="17" r="6" fill="#57b858" /><path d="M33 11a6 6 0 016 6h-6z" fill="#e6533d" /><path d="M33 11a6 6 0 00-6 6h6z" fill="#f1b63b" /></Art>
      </Tile>
      <Tile bg="bg-[linear-gradient(180deg,#97f07b,#62cf45)]">
        <Art><rect x="12" y="43" width="8" height="14" rx="2" fill="#f2f6f1" /><rect x="23" y="31" width="8" height="26" rx="2" fill="#f2f6f1" /><rect x="35" y="9" width="8" height="48" rx="2" fill="#f2f6f1" /><rect x="46" y="22" width="8" height="35" rx="2" fill="#f2f6f1" /></Art>
      </Tile>
      <Tile bg="bg-[linear-gradient(180deg,#3a46f5,#1f27f2)]" dot>
        <Art><circle cx="33" cy="33" r="23" stroke="#fff" strokeWidth="2.200" strokeDasharray="7 2.500" /><path d="M33 13.500a19.500 19.500 0 11-9.500 36.600L14 53l3-9A19.500 19.500 0 0133 13.500z" fill="#fff" /></Art>
      </Tile>
      <Tile bg="bg-[linear-gradient(180deg,#f5b650,#ee8b36)]">
        <Art><path d="M11 56h45" stroke="#f9cf9f" strokeWidth="2" /><path d="M54 13q2 2-1 8L21 50l-9 5 2-10 34-30q4-4 6-2z" fill="#f5f3f0" /><path d="M31 33l4 5" stroke="#aaa" strokeWidth="1.500" /></Art>
      </Tile>
      <Tile bg="bg-white" dot>
        <Art><path d="M18 13q0-2 2-2h33q2 0 2 2v40q0 2-2 2H20q-2 0-2-2z" fill="#21a366" /><path d="M18 33h37v20q0 2-2 2H20q-2 0-2-2z" fill="#185c37" /><path d="M36 33h19v11H36z" fill="#107c41" /><path d="M36 11h17q2 0 2 2v9H36z" fill="#54b886" /></Art>
        <OfficeBadge letter="X" className="bg-[#17703c]" />
      </Tile>
      <Tile bg="bg-[linear-gradient(180deg,#4fb9f2,#2457d8)]">
        <Art><path d="M29 14l20 34M37 14L17 48M8 41h28M44 41h14" stroke="#fff" strokeWidth="5" strokeLinecap="round" /></Art>
      </Tile>
      <Tile bg="bg-[linear-gradient(180deg,#cfd5d9,#8e8e8e)]" badge="1">
        <Art>
          <circle cx="33" cy="33" r="27" fill="#5c5e5f" stroke="#2b2c2d" strokeWidth="2.500" strokeDasharray="2 1.500" />
          <circle cx="33" cy="33" r="21" fill="#3b3c3d" stroke="#a5a7a8" strokeWidth="3" />
          <circle cx="33" cy="33" r="7" stroke="#b9bbbc" strokeWidth="3" />
          <path d="M40 33h14M29.500 27L22 15M29.500 39L22 51" stroke="#b9bbbc" strokeWidth="3.500" />
        </Art>
      </Tile>
      <Divider />
      <Tile bg="bg-white" dot>
        <Art><circle cx="34" cy="18" r="7" fill="#7b83eb" /><circle cx="49" cy="19" r="5" fill="#5059c9" /><path d="M43 27h13v14q0 7-7 7t-7-7z" fill="#5059c9" /><path d="M20 27h26v15q0 13-13 13T20 42z" fill="#7b83eb" /></Art>
        <OfficeBadge letter="T" className="bg-[#464eb8]" />
      </Tile>
      <Tile bg="bg-white" dot>
        <Art><path d="M17 13q0-2 2-2h32q2 0 2 2v16H17z" fill="#1f62b5" /><path d="M17 17h12v12H17z" fill="#0f56a3" /><path d="M41 17h12v12H41z" fill="#50d9ff" /><path d="M29 17h12v12H29z" fill="#28a8ea" /><path d="M17 29h38v24q0 2-2 2H19q-2 0-2-2z" fill="#2a86d6" /><path d="M55 30v24L33 42z" fill="#5cc0f5" /></Art>
        <OfficeBadge letter="O" className="bg-[#1d62b8]" />
      </Tile>
      <Tile bg="bg-white" dot>
        <Art><circle cx="34" cy="33" r="22" fill="#e2714d" /><path d="M34 11a22 22 0 0122 22H34z" fill="#f4946f" /><path d="M12 33h44a22 22 0 01-44 0z" fill="#c75a39" /></Art>
        <OfficeBadge letter="P" className="bg-[#b83d1f]" />
      </Tile>
      <Tile bg="bg-white" dot>
        <Art><path d="M17 13q0-2 2-2h34q2 0 2 2v9H17z" fill="#5aa4ee" /><path d="M17 22h38v11H17z" fill="#3578d6" /><path d="M17 33h38v11H17z" fill="#2557b5" /><path d="M17 44h38v9q0 2-2 2H19q-2 0-2-2z" fill="#1c3f8b" /></Art>
        <OfficeBadge letter="W" className="bg-[#2157b8]" />
      </Tile>
      <Tile bg="bg-[#f4f3ef]" dot>
        <Art>
          <circle cx="33" cy="33" r="28.500" fill="#f2bf42" />
          <path d="M33 33L8.300 18.800A28.500 28.500 0 0157.700 18.800z" fill="#d8503f" />
          <path d="M8.300 18.800A28.500 28.500 0 0033 61.500L45 40 33 33z" fill="#4a9c52" />
          <circle cx="33" cy="33" r="13.500" fill="#fff" /><circle cx="33" cy="33" r="11" fill="#3f7de8" />
        </Art>
      </Tile>
      <Divider />
      <div className="flex w-[86px] shrink-0 justify-center">
        <svg viewBox="0 0 54 72" className="-mt-[3px] h-[72px] w-[54px]">
          <path d="M0 0h34l20 20v22l-2 30H1z" fill="#fff" /><path d="M34 0l20 20H38q-4 0-4-4z" fill="#d8d8d8" />
          <rect x="11" y="28" width="32" height="33" rx="2" fill="#a9b1b5" /><rect x="14" y="29" width="18" height="6" fill="#333" /><circle cx="27" cy="44" r="11" fill="#bfc6c9" stroke="#8d9599" /><path d="M11 57h32v4H11z" fill="#4a4f52" />
        </svg>
      </div>
      <div className="flex w-[86px] shrink-0 justify-center">
        <svg viewBox="0 0 58 78" className="-mt-[8px] h-[78px] w-[58px]">
          <path d="M2 12L12 3l8 3 6-5 9 4 8-3 6 7 7 5-3 10H5z" fill="#d5d3d0" />
          <path d="M14 8l6 8 5-9 6 8 6-7 8 9" stroke="#6d6a67" strokeWidth="2" fill="none" /><path d="M22 13l6-3 4 6-7 2z" fill="#4aa3d8" />
          <path d="M0 14q29 9 58 0l-7 56q-2 8-22 8T7 70z" fill="#dcdcdb" /><path d="M0 14q29 9 58 0" stroke="#fff" strokeWidth="2" fill="none" />
        </svg>
      </div>
    </div>
  );
}

export default function App() {
  return (
    <div className="flex h-[1912px] w-[2940px] flex-col overflow-hidden bg-[linear-gradient(90deg,#090b06_0%,#141709_5%,#0c110a_20%,#10150b_40%,#1a1f0f_60%,#1a140c_75%,#2b2413_90%,#35301c_100%)] font-['Inter',sans-serif]">
      <MenuBar />
      <div className="mt-[2px] flex h-[1720px] shrink-0 flex-col overflow-hidden rounded-[20px] bg-white shadow-[0_0_0_2px_#6e6e70]">
        <TabStrip />
        <Toolbar />
        <div className="flex min-h-0 flex-1">
          <Sidebar />
          <Module />
        </div>
      </div>
      <Dock />
    </div>
  );
}
